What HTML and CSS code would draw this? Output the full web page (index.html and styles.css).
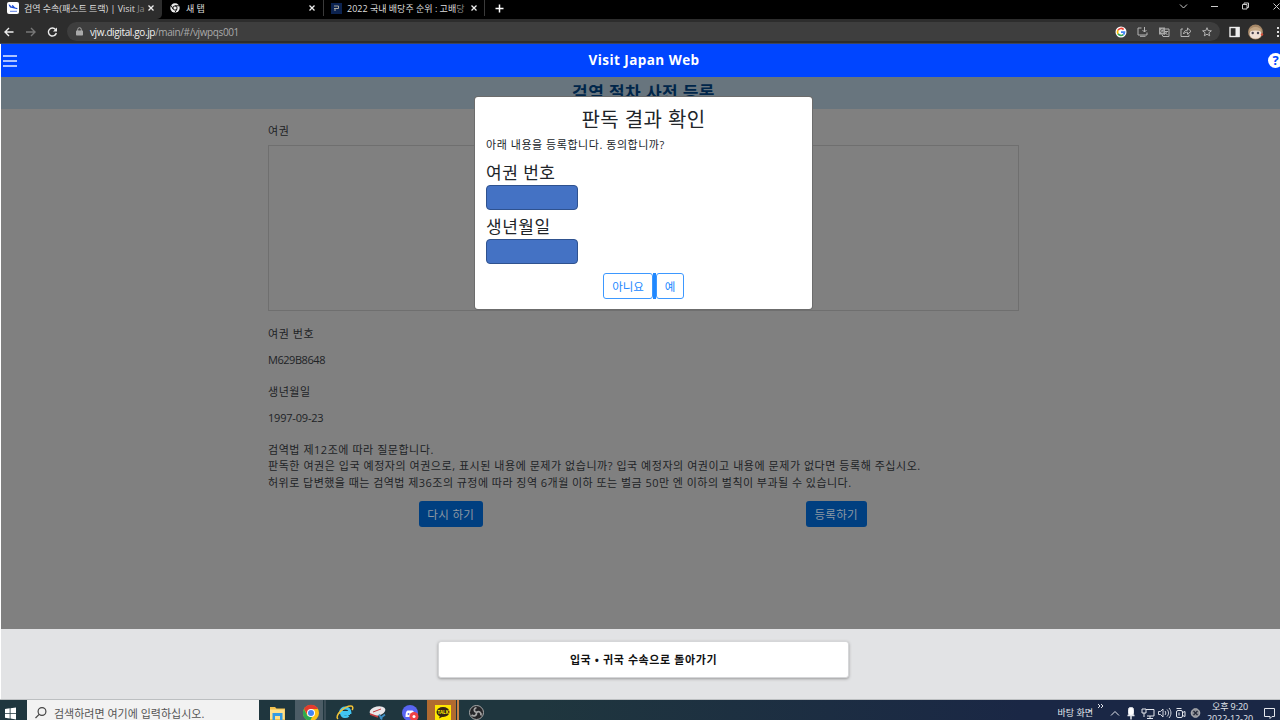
FILE: index.html
```html
<!DOCTYPE html>
<html lang="ko">
<head>
    <meta charset="UTF-8">
    <meta name="viewport" content="width=device-width, initial-scale=1.0">
    <title>검역 수속(패스트 트랙) | Visit Japan Web</title>
    <link rel="stylesheet" href="styles.css">
</head>
<body>

<!-- browser tabs -->
<div class="tabs">
    <div class="tab active">
        <svg class="favicon" width="12" height="12" viewBox="0 0 12 12"><rect width="12" height="12" rx="2" fill="#fff"/><path d="M1.500 2.500l1.500.3 1 1.400 1.500.5L4.800 3l1.200.2 2 2.200 2 .7c.8.4.5 1.200-.4 1L3 5.500z" fill="#1746d1"/><path d="M3 9.300h7" stroke="#5a7ce0"/></svg>
        <span class="tab-title">검역 수속(패스트 트랙) | Visit <i>Ja</i></span>
        <svg class="close" width="6" height="6" viewBox="0 0 6 6"><path d="M.5.5l5 5M5.500.5l-5 5"/></svg>
    </div>
    <div class="tab second">
        <svg class="favicon" width="10" height="10" viewBox="0 0 10 10"><circle cx="5" cy="5" r="4.700" fill="#eee"/><circle cx="5" cy="5" r="2.100" fill="#eee" stroke="#000" stroke-width=".9"/><path d="M5 2.800h4.200M3.100 6.100L1 2.500M6.900 6.100L4.800 9.700" stroke="#000" stroke-width=".9"/></svg>
        <span class="tab-title">새 탭</span>
        <svg class="close" width="6" height="6" viewBox="0 0 6 6"><path d="M.5.5l5 5M5.500.5l-5 5"/></svg>
    </div>
    <div class="tab third">
        <svg class="favicon" width="11" height="11" viewBox="0 0 11 11"><rect width="11" height="11" fill="#0c2350"/><path d="M3 3h4.500v2.500H3M4 5.500V8" stroke="#a9a89c" fill="none"/></svg>
        <span class="tab-title">2022 국내 배당주 순위 : 고배<i>당</i></span>
        <svg class="close" width="6" height="6" viewBox="0 0 6 6"><path d="M.5.5l5 5M5.500.5l-5 5"/></svg>
    </div>
    <svg class="new-tab" width="9" height="9" viewBox="0 0 9 9"><path d="M4.500 0.500v8M.5 4.500h8" stroke="#fff" stroke-width="1.500"/></svg>
    <svg class="window-buttons" width="108" height="14" viewBox="0 0 108 14" fill="none" stroke="#ccc"><path d="M8 4.500l3.500 3.500L15 4.500M39 6.500h7M70.500 4.500h4.500V9h-4.500zM72 4.500V3h4.500v4.500H75M101.500 3.500l6 6M107.500 3.500l-6 6"/></svg>
</div>

<!-- address bar -->
<div class="toolbar">
    <svg class="nav-buttons" width="60" height="24" viewBox="0 0 60 24" fill="none" stroke-width="1.400"><path d="M13.500 12h-8M9 8l-4 4 4 4" stroke="#eee"/><path d="M26 12h8.500M31 8l4 4-4 4" stroke="#777"/><path d="M55.500 9.500a4 4 0 1 0 .8 3.500" stroke="#eee"/><path d="M57 7.500v4h-4z" fill="#eee"/></svg>
    <div class="address">
        <svg class="lock" width="7" height="9" viewBox="0 0 7 9"><rect y="3.500" width="7" height="5" rx=".7" fill="#aaa"/><path d="M1.700 4V2.500a1.800 1.800 0 0 1 3.600 0V4" fill="none" stroke="#aaa"/></svg>
        <span class="url"><b>vjw.digital.go.jp</b>/main/#/vjwpqs001</span>
        <svg class="address-icons" width="104" height="18" viewBox="0 0 104 18" fill="none" stroke="#b4b4b4">
            <circle cx="9" cy="9" r="5.500" fill="#fff" stroke="none"/>
            <g stroke-width="1.700"><path d="M11.600 6.600A3.500 3.500 0 0 0 6 7.200" stroke="#ea4335"/><path d="M6 7.200a3.500 3.500 0 0 0 0 3.600" stroke="#fbbc05"/><path d="M6 10.800a3.500 3.500 0 0 0 5.300.8" stroke="#34a853"/><path d="M11.300 11.600A3.500 3.500 0 0 0 12.500 9.100H9" stroke="#4285f4"/></g>
            <path d="M29.500 5H26v7h9V9.500M28 13.300h5.500M32.500 4v5M30.500 7l2 2 2-2"/>
            <rect x="47" y="4.500" width="6" height="7" fill="#a8a8a8" stroke="none"/><path d="M53 6h4v7.500h-6l-1-2M53 8.500h3M54.500 8c0 2-1 3-2 3.500M53 9.500l2.500 2.500"/><path d="M51.500 7a1.600 1.600 0 1 0 0 2h-1.300" stroke="#444" stroke-width=".8"/>
            <path d="M71 6h-2v7.500h8V11.500M71.500 11c.3-2.500 1.600-3.800 4-3.800V5l3.500 3.300-3.500 3V9.200c-1.800 0-3 .5-4 1.800z"/>
            <path d="M95 4.700l1.200 2.900 3.200.2-2.500 2 .8 3L95 11.200l-2.700 1.600.8-3-2.500-2 3.200-.2z"/>
        </svg>
    </div>
    <svg class="profile-icons" width="56" height="24" viewBox="0 0 56 24">
        <rect x="6" y="7.500" width="9" height="9" fill="none" stroke="#eee" stroke-width="1.400"/><path d="M11.500 7h4v10h-4z" fill="#eee"/>
        <circle cx="31.500" cy="12" r="7.500" fill="#a58767"/><ellipse cx="31.500" cy="14" rx="6" ry="4.800" fill="#f0dfd5"/><path d="M25 11.500c1-6 12-6 13 0-4-1.500-9-1.500-13 0" fill="#c2a582"/><circle cx="28.700" cy="13" r="1.200" fill="#47424f"/><circle cx="34" cy="13" r="1.200" fill="#47424f"/><circle cx="38" cy="14.500" r="1.200" fill="#d44b38"/>
        <path d="M53 7h2v2h-2zM53 11h2v2h-2zM53 15h2v2h-2z" fill="#ddd"/>
    </svg>
</div>

<div class="page">
    <header class="site-header">
        <svg class="menu" width="14" height="12" viewBox="0 0 14 12"><path d="M0 1h14M0 6h14M0 11h14" stroke="#e6edff" stroke-width="1.500"/></svg>
        <h1>Visit Japan Web</h1>
        <span class="help">?</span>
    </header>

    <div class="dimmed">
        <h2 class="page-title">검역 절차 사전 등록</h2>
        <main class="content">
            <p class="label">여권</p>
            <div class="passport-box"></div>
            <p class="label number-label">여권 번호</p>
            <p class="value">M629B8648</p>
            <p class="label birth-label">생년월일</p>
            <p class="value date">1997-09-23</p>
            <div class="notice">
                <p>검역법 제12조에 따라 질문합니다.</p>
                <p>판독한 여권은 입국 예정자의 여권으로, 표시된 내용에 문제가 없습니까? 입국 예정자의 여권이고 내용에 문제가 없다면 등록해 주십시오.</p>
                <p class="penalty">허위로 답변했을 때는 검역법 제36조의 규정에 따라 징역 6개월 이하 또는 벌금 50만 엔 이하의 벌칙이 부과될 수 있습니다.</p>
            </div>
            <div class="actions">
                <div><button class="btn retry">다시 하기</button></div>
                <div><button class="btn register">등록하기</button></div>
            </div>
        </main>
    </div>

    <!-- confirmation dialog -->
    <div class="modal">
        <h3>판독 결과 확인</h3>
        <p class="question">아래 내용을 등록합니다. 동의합니까?</p>
        <h4>여권 번호</h4>
        <div class="masked"></div>
        <h4 class="birth">생년월일</h4>
        <div class="masked"></div>
        <div class="modal-buttons">
            <button class="no">아니요</button>
            <span class="divider"></span>
            <button class="yes">예</button>
        </div>
    </div>

    <footer class="site-footer">
        <button class="back">입국 • 귀국 수속으로 돌아가기</button>
    </footer>
</div>

<!-- windows taskbar -->
<div class="taskbar">
    <svg class="start" width="27" height="20" viewBox="0 0 27 20"><path d="M5 9l4.700-.7V13H5zM10.500 8.200L16 7.500V13h-5.500zM5 13.800h4.700v4.700L5 17.800zM10.500 13.800H16v5.700l-5.500-.9z" fill="#fff"/></svg>
    <div class="search">
        <svg width="14" height="14" viewBox="0 0 14 14" fill="none" stroke="#444" stroke-width="1.200"><circle cx="8" cy="5.500" r="3.900"/><path d="M5.200 8.300L1.500 12"/></svg>
        <span>검색하려면 여기에 입력하십시오.</span>
    </div>
    <svg class="apps" width="235" height="20" viewBox="0 0 235 20">
        <path d="M36 0h28v20H36z" fill="#4c5d66"/><path d="M65 0h2v20h-2z" fill="#3b4d56"/>
        <path d="M168 0h29v20h-29z" fill="#b06a30"/><path d="M198 0h2v20h-2z" fill="#c88045"/>
        <path d="M11 7h5l1.500 1.500H26V20H11z" fill="#f2c14e"/><path d="M11 9.500h14.500V19H11z" fill="#ffe18b"/><path d="M13.500 13h10v7h-2.500v-4h-5v4h-2.500z" fill="#349be3"/>
        <circle cx="52" cy="13" r="8" fill="#fbc116"/><path d="M45 9a8 8 0 0 1 14 0H52l-3.500 6z" fill="#e33b2e"/><path d="M45 9a8 8 0 0 0 6 12l2.500-5h-5z" fill="#2da94f"/><circle cx="52" cy="13" r="4" fill="#fff"/><circle cx="52" cy="13" r="3" fill="#4285f4"/>
        <path d="M91 13.500h-8.500c.5 3.500 4.500 4 7 2M81.500 12.500c0-6 9.500-6 9.500 0z" fill="none" stroke="#41c5f2" stroke-width="2.800"/><path d="M79 19c-4-3 6-13 13-13 2.500 0 2 3 1 4" fill="none" stroke="#f2c336" stroke-width="1.500"/>
        <ellipse cx="118.500" cy="11" rx="8" ry="4.500" transform="rotate(-12 118.500 11)" fill="#e9e6e8"/><path d="M114 12l8-3" stroke="#c63b3f"/><path d="M111 14l8 3" stroke="#c9383d" stroke-width="1.500"/><path d="M120 14.500l3 5M126 14.500l-5 4" stroke="#3e8fc5" stroke-width="1.700"/>
        <circle cx="151" cy="13" r="8" fill="#5865f2"/><path d="M146.500 17c0-4 .6-6 2-6.500h5c1.500.5 2 2.500 2 6.500z" fill="#fff"/><circle cx="149.500" cy="14" r="1" fill="#5865f2"/><circle cx="155" cy="16.500" r="4.500" fill="#ed4245"/><circle cx="155" cy="16.500" r="1.500" fill="#fff"/>
        <path d="M176 5h16v15h-16z" fill="#ffe600"/><ellipse cx="184" cy="12" rx="6.500" ry="5" fill="#352413"/><path d="M181 15.500l-1 3 4-2" fill="#352413"/><text x="184" y="13.700" text-anchor="middle" class="talk">TALK</text>
        <circle cx="217.500" cy="12.500" r="7" fill="#252528" stroke="#aaa"/><path d="M217.500 12.500c-3-1-3-4 0-5M217.500 12.500c2.500-2 5 0 4.500 3M217.500 12.500c.5 3-2.500 4.500-5 2.500" fill="none" stroke="#a5a5a5" stroke-width="1.800"/>
    </svg>
    <div class="tray">
        <span class="desktop">바탕 화면</span>
        <svg width="112" height="20" viewBox="0 0 112 20" fill="none" stroke="#e4e7ed">
            <path d="M5 4l2 2-2 2M8 4l2 2-2 2M18 15.500l4-4 4 4"/>
            <rect x="35.500" y="7.500" width="5" height="8" rx="2" fill="#fff"/><path d="M34.500 15.500h7M38 15v4.500" stroke-width="1.500"/>
            <path d="M53 9.500h8V16h-7M57 16v3M54 18.500h6M49 9h4v4h-4zM51 13v4"/>
            <path d="M65.500 11.500h2L70 9v8l-2.500-2.500h-2zM72 11c1 1 1 3 0 4M74 9.500c2 2 2 5 0 7M76 8c2.600 3 2.600 7 0 10" stroke-width=".9"/>
            <rect x="83.500" y="10.500" width="6" height="7" rx="1.500"/><path d="M89.500 12.500l2.500-1v5l-2.500-1M83.500 8.500h5M86 12.500v3"/>
            <circle cx="102.500" cy="13" r="4.300" fill="#8f9198" stroke="#bbb"/><path d="M100.500 11l4 4M104.500 11l-4 4" stroke="#252a38" stroke-width="1.300"/>
        </svg>
        <div class="clock"><span>오후 9:20</span><span>2022-12-20</span></div>
        <svg class="notifications" width="14" height="20" viewBox="0 0 14 20"><path d="M1.500 8.500h10v8H9l-2 2v-2H1.500z" fill="none" stroke="#e4e7ed"/></svg>
    </div>
</div>

</body>
</html>
```
FILE: styles.css
```css
* {
    box-sizing: border-box;
}
body {
    margin: 0;
    width: 1280px;
    height: 720px;
    overflow: hidden;
    background-color: white;
    font-family: "Open Sans", "Noto Sans CJK KR", sans-serif;
    font-size: 11px;
    color: #212529;
    display: flex;
    flex-direction: column;
}
h1, h2, h3, h4, p {
    margin: 0;
    font-weight: normal;
}
svg {
    flex: none;
}
button {
    font-family: inherit;
    padding: 0;
    white-space: nowrap;
}

/* browser */
.tabs {
    height: 19px;
    flex: none;
    background-color: black;
    display: flex;
    align-items: flex-start;
}
.tab {
    height: 16px;
    width: 162px;
    display: flex;
    align-items: center;
    padding: 0 8px 0 7px;
    color: #ddd;
    font-size: 9px;
    white-space: nowrap;
}
.tab.active {
    height: 19px;
    padding-bottom: 3px;
    background-color: #2d2d2d;
    border-radius: 0 0 5px 0;
}
.tab.second {
    padding-left: 8px;
}
.tab.third {
    width: 161px;
    padding-right: 7px;
}
.tab.second,
.tab.third {
    border-right: 1px solid #3a3a3a;
}
.tab-title {
    margin-left: 5px;
}
.active .tab-title {
    letter-spacing: -0.03px;
}
.tab-title i {
    font-style: normal;
    color: #888;
}
.second .tab-title {
    margin-left: 6px;
}
.close {
    margin-left: auto;
    fill: none;
    stroke: #eee;
    stroke-width: 1.3;
}
.new-tab {
    margin: 4px 0 0 10px;
}
.window-buttons {
    margin-left: auto;
}
.toolbar {
    height: 25px;
    flex: none;
    background-color: #2d2d2d;
    border-bottom: 1px solid #3c4560;
    padding-top: 1px;
    display: flex;
    align-items: center;
}
.nav-buttons {
    margin-right: 7px;
}
.address {
    width: 1153px;
    height: 19px;
    border-radius: 10px;
    background-color: #3e3e3e;
    display: flex;
    align-items: center;
    padding-left: 9px;
}
.url {
    margin-left: 7px;
    color: #aaa;
    font-size: 10px;
    letter-spacing: -0.38px;
}
.url b {
    font-weight: normal;
    color: #f1f1f1;
}
.address-icons {
    margin-left: auto;
    margin-right: 4px;
}
.profile-icons {
    margin-left: 4px;
}

/* page */
.page {
    height: 655px;
    margin-left: 1px;
    position: relative;
    display: flex;
    flex-direction: column;
}
.site-header {
    height: 33px;
    flex: none;
    background-color: #0045ff;
    display: flex;
    align-items: center;
    position: relative;
    overflow: hidden;
}
.menu {
    margin-left: 2px;
}
.site-header h1 {
    width: 1254px;
    flex: none;
    padding-bottom: 1px;
    text-align: center;
    color: white;
    font-size: 13.5px;
    font-weight: bold;
    letter-spacing: 0.45px;
}
.help {
    position: absolute;
    left: 1267px;
    top: 9px;
    width: 15px;
    height: 15px;
    border-radius: 50%;
    background-color: white;
    color: #0045ff;
    font-size: 13px;
    font-weight: bold;
    line-height: 15px;
    text-align: center;
}
.dimmed {
    height: 552px;
    flex: none;
    background-color: #808080;
    color: #212326;
}
.page-title {
    height: 32px;
    background-color: #68757e;
    color: #00264a;
    text-align: center;
    font-size: 17px;
    font-weight: bold;
    line-height: 32px;
    letter-spacing: 0.4px;
    padding-left: 6px;
}
.content {
    width: 751px;
    margin-left: 267px;
    padding-top: 14px;
}
.label,
.value {
    height: 16px;
    line-height: 16px;
    white-space: nowrap;
}
.label,
.notice,
.question {
    letter-spacing: 0.54px;
}
.passport-box {
    height: 166px;
    margin-top: 6px;
    border: 1px solid #6f6f6f;
}
.number-label {
    margin-top: 15px;
}
.value {
    margin-top: 10px;
    letter-spacing: -0.45px;
}
.value.date {
    letter-spacing: -0.2px;
}
.birth-label {
    margin-top: 16px;
}
.notice {
    margin-top: 16px;
    line-height: 16.3px;
    white-space: nowrap;
}
.penalty {
    letter-spacing: 0.46px;
}
.actions {
    display: grid;
    grid-template-columns: 1fr 1fr;
    margin-top: 10px;
}
.actions div {
    text-align: center;
}
.btn {
    height: 26px;
    border: none;
    border-radius: 3px;
    background-color: #003f80;
    color: #8d98a3;
    font-size: 11.5px;
    letter-spacing: 0.3px;
}
.retry {
    width: 64px;
    margin-right: 10px;
}
.register {
    width: 61px;
    margin-left: 10px;
}

/* dialog */
.modal {
    position: absolute;
    left: 474px;
    top: 53px;
    width: 337px;
    height: 212px;
    padding: 9px 11px 0;
    background-color: white;
    border-radius: 3px;
    box-shadow: 0 0 0 1px #6c6c6c;
    white-space: nowrap;
}
.modal h3 {
    height: 28px;
    line-height: 28px;
    font-size: 20px;
    letter-spacing: 0.4px;
    text-align: center;
}
.question {
    height: 21px;
    line-height: 21px;
}
.modal h4 {
    height: 24px;
    margin-top: 6px;
    line-height: 24px;
    font-size: 17px;
    letter-spacing: 0.5px;
}
.masked {
    width: 92px;
    height: 25px;
    border: 1px solid #2f528f;
    border-radius: 4px;
    background-color: #4472c4;
}
.modal h4.birth {
    margin-top: 5px;
}
.modal-buttons {
    display: flex;
    justify-content: center;
    margin-top: 9px;
}
.modal-buttons button {
    height: 26px;
    border: 1px solid #3d98ff;
    border-radius: 3px;
    background-color: white;
    color: #2088ff;
    font-size: 11.5px;
}
.modal-buttons .no {
    width: 50px;
}
.modal-buttons .yes {
    width: 28px;
}
.divider {
    width: 3px;
    background-color: #2088ff;
}
.site-footer {
    height: 70px;
    background-color: #e2e3e5;
    display: flex;
    justify-content: center;
    align-items: flex-start;
    padding-top: 12px;
    padding-left: 6px;
}
.back {
    width: 411px;
    height: 37px;
    padding-bottom: 1px;
    border: 1px solid #d5d6d8;
    border-radius: 3px;
    background-color: white;
    box-shadow: 0 1px 3px #999;
    color: #111;
    font-size: 11px;
    font-weight: bold;
    letter-spacing: 0.6px;
}

/* taskbar */
.taskbar {
    height: 21px;
    flex: none;
    border-top: 1px solid #bcbfc1;
    background: linear-gradient(90deg, #1f363e 0%, #1f363e 42%, #1a2745 80%);
    display: flex;
}
.search {
    width: 232px;
    background-color: #f2f2f2;
    color: #555;
    display: flex;
    align-items: center;
    padding-left: 7px;
    padding-top: 6px;
    white-space: nowrap;
}
.search span {
    margin-left: 6px;
}
.talk {
    font-size: 4.5px;
    font-weight: bold;
    fill: #ffe600;
}
.tray {
    margin-left: auto;
    display: flex;
    color: #e4e7ed;
    font-size: 9px;
    white-space: nowrap;
}
.desktop {
    padding-top: 6px;
}
.clock {
    width: 46px;
    display: flex;
    flex-direction: column;
    align-items: center;
    line-height: 12px;
    letter-spacing: -0.1px;
    padding-top: 1px;
    margin-left: 2px;
}
.notifications {
    margin: 0 3px 0 10px;
}
```
